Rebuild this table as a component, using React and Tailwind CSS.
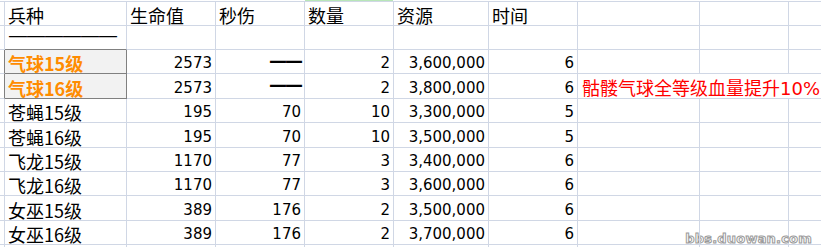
import React from 'react';

const cols = ['w-[5px]', 'w-[122px]', 'w-[89px]', 'w-[89px]', 'w-[89px]', 'w-[95px]', 'w-[89px]', 'w-[122px]', 'w-[89px]', 'flex-1'];

const rows = [
  { h: 'h-[24px]', label: '兵种', vals: ['生命值', '秒伤', '数量', '资源', '时间'], head: true },
  { h: 'h-[24px]', label: '——————', vals: ['', '', '', '', ''], dashRow: true },
  { h: 'h-[24px]', label: '气球15级', vals: ['2573', '——', '2', '3,600,000', '6'], hot: true },
  { h: 'h-[25px]', label: '气球16级', vals: ['2573', '——', '2', '3,800,000', '6'], hot: true, note: true },
  { h: 'h-[24px]', label: '苍蝇15级', vals: ['195', '70', '10', '3,300,000', '5'] },
  { h: 'h-[25px]', label: '苍蝇16级', vals: ['195', '70', '10', '3,500,000', '5'] },
  { h: 'h-[24px]', label: '飞龙15级', vals: ['1170', '77', '3', '3,400,000', '6'] },
  { h: 'h-[24px]', label: '飞龙16级', vals: ['1170', '77', '3', '3,600,000', '6'] },
  { h: 'h-[25px]', label: '女巫15级', vals: ['389', '176', '2', '3,500,000', '6'] },
  { h: 'h-[24px]', label: '女巫16级', vals: ['389', '176', '2', '3,700,000', '6'] },
];

const cjk = "font-['Noto_Sans_CJK_SC',sans-serif]";
const num = "font-['DejaVu_Sans','Noto_Sans_CJK_SC',sans-serif]";

function Row({ row }) {
  const grid = 'border-[#d0d7e5]';
  let labelCls = `${cjk} text-[18px] pt-[3px]`;
  if (row.dashRow) labelCls = `${num} text-[20px] pb-[5px] tracking-[-2px]`;
  return (
    <div className={`flex ${row.h}`}>
      <div className={`${cols[0]} shrink-0 border-r border-b ${grid} ${row.hot ? 'border-r-[#808080]' : ''}`} />
      <div
        className={`${cols[1]} shrink-0 border-r border-b pl-[3px] flex items-center leading-none whitespace-nowrap ${labelCls} ${
          row.hot ? 'bg-[#f2f2f2] border-[#808080] text-[#ff8c00] font-bold' : grid + ' text-black'
        } ${row.dashRow ? 'border-b-[#808080]' : ''}`}
      >
        {row.label}
      </div>
      {row.vals.map((v, i) => {
        const dash = v === '——';
        const align = row.head ? 'justify-start pl-[3px]' : 'justify-end pr-[3px]';
        const font = row.head
          ? `${cjk} text-[18px] pt-[3px]`
          : dash
          ? `${num} text-[18px] pb-[2px] tracking-[-2px] font-bold`
          : `${num} text-[15px] pt-[4px]`;
        return (
          <div key={i} className={`${cols[i + 2]} shrink-0 border-r border-b ${grid} flex items-center ${align} ${font} leading-none text-black whitespace-nowrap`}>
            {v}
          </div>
        );
      })}
      <div className={`${cols[7]} shrink-0 border-b ${grid} ${row.note ? '' : 'border-r'} flex items-center pl-[4px] pt-[3px] whitespace-nowrap relative z-10`}>
        {row.note && (
          <span className={`${cjk} text-[18px] leading-none text-[#ff0000]`}>
            骷髅气球全等级血量提升<span className={`${num} text-[18px]`}>10%</span>
          </span>
        )}
      </div>
      <div className={`${cols[8]} shrink-0 border-b ${grid} ${row.note ? '' : 'border-r'}`} />
      <div className={`${cols[9]} border-b ${grid}`} />
    </div>
  );
}

export default function App() {
  return (
    <div className="w-[821px] h-[247px] overflow-hidden bg-white relative">
      {/* top edge of the sheet, with the highlighted column */}
      <div className="flex h-[2px] border-b border-[#d0d7e5]">
        <div className="w-[305px] shrink-0" />
        <div className="w-[88px] shrink-0 bg-[#b8e6b8]" />
        <div className="flex-1" />
      </div>
      {rows.map((row, i) => (
        <Row key={i} row={row} />
      ))}
      <div className="flex h-[3px]">
        <div className="w-[5px] shrink-0 border-r border-[#d0d7e5]" />
        <div className="w-[122px] shrink-0 border-r border-[#d0d7e5]" />
        <div className="w-[89px] shrink-0 border-r border-[#d0d7e5]" />
        <div className="w-[89px] shrink-0 border-r border-[#d0d7e5]" />
        <div className="w-[89px] shrink-0 border-r border-[#d0d7e5]" />
        <div className="w-[95px] shrink-0 border-r border-[#d0d7e5]" />
        <div className="w-[89px] shrink-0 border-r border-[#d0d7e5]" />
        <div className="w-[122px] shrink-0 border-r border-[#d0d7e5]" />
        <div className="w-[89px] shrink-0 border-r border-[#d0d7e5]" />
      </div>

      {/* watermark */}
      <div className="absolute right-[9px] bottom-[2px] font-['DejaVu_Sans',sans-serif] font-bold text-[13px] leading-none text-white [-webkit-text-stroke:1px_#9a9a9a] tracking-[0.2px]">
        bbs.duowan.com
      </div>
    </div>
  );
}
